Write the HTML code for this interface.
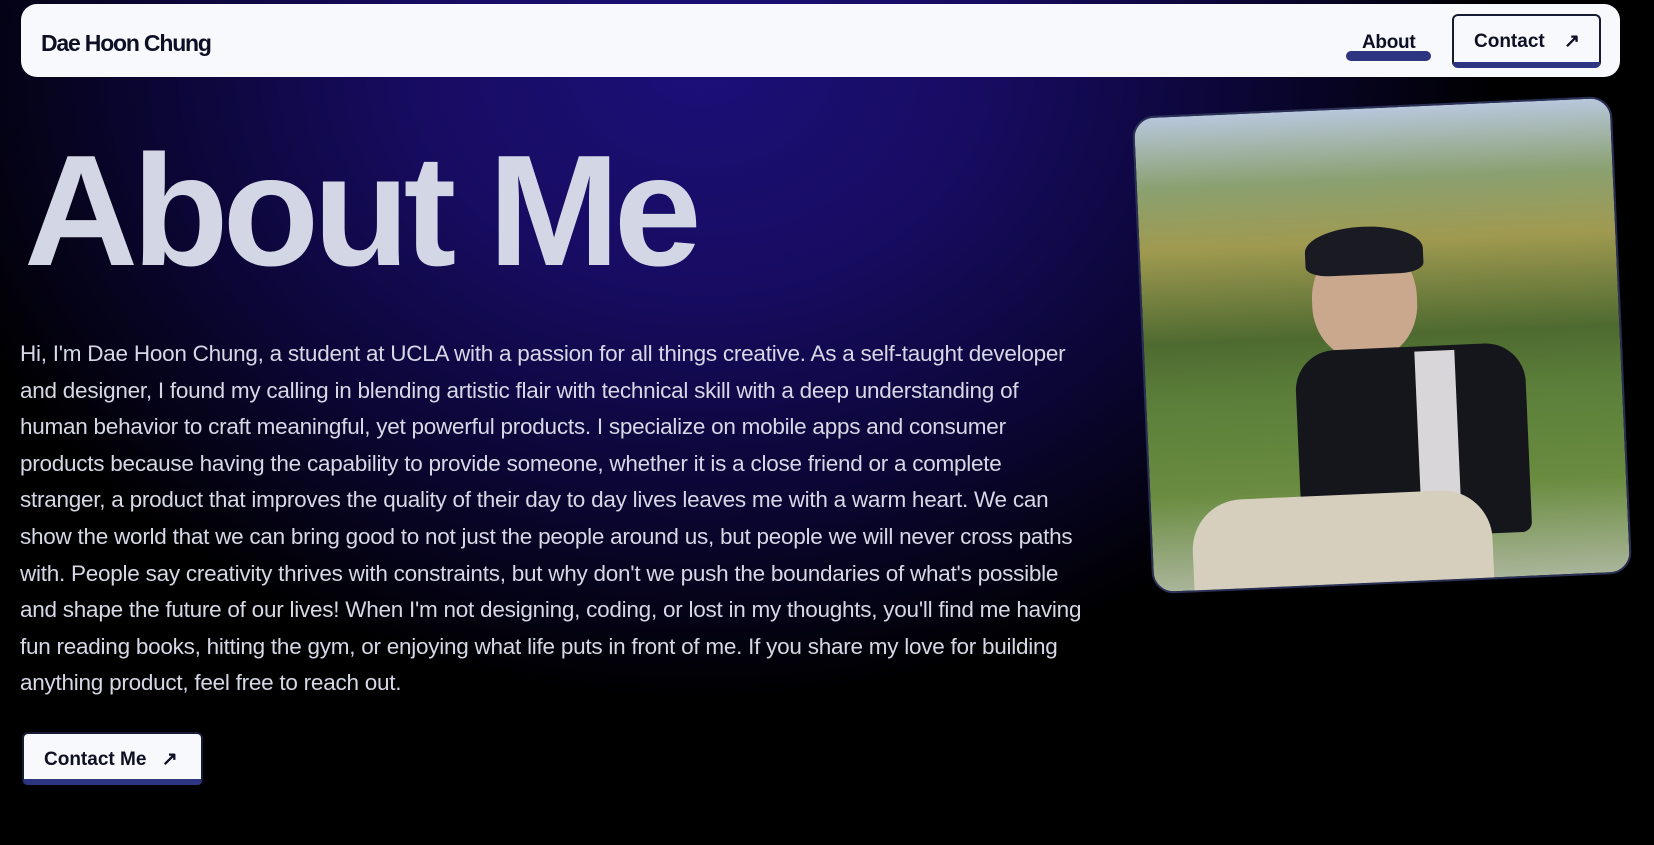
<!DOCTYPE html>
<html><head><style>
*{margin:0;padding:0;box-sizing:border-box}
body{width:1654px;height:845px;overflow:hidden;background:#000;font-family:"Liberation Sans",sans-serif;position:relative;
background:radial-gradient(ellipse 800px 640px at 700px 60px,#1c0f78 0%,#170c62 35%,#0b0635 68%,#000 100%);}
.nav{position:absolute;left:21px;top:4px;width:1599px;height:73px;background:#f8f9fc;border-radius:16px}
.logo{position:absolute;left:20px;top:26px;font-size:23px;font-weight:bold;color:#0d1024;letter-spacing:-1.2px}
.about{position:absolute;left:1341px;top:28px;font-size:19px;font-weight:bold;color:#0d1024;letter-spacing:-0.3px}
.pill{position:absolute;left:1325px;top:47px;width:85px;height:10px;border-radius:5px;background:#2d3582}
.btn{position:absolute;background:#f8f9fc;border:2px solid #161a33;border-bottom:6px solid #2d3582;border-radius:6px;font-weight:bold;color:#0d1024;font-size:19px}
.h1{position:absolute;left:24px;top:132px;font-size:158px;font-weight:bold;color:#d3d6e4;letter-spacing:-6px;line-height:1}
.p{position:absolute;left:20px;top:336px;font-size:22.5px;line-height:36.6px;color:#d6d8e6;white-space:nowrap;letter-spacing:-0.25px}
.photo{position:absolute;left:1142px;top:106px;width:480px;height:478px;border-radius:22px;border:2px solid #2a2f55;transform:rotate(-2.5deg);overflow:hidden;
background:linear-gradient(180deg,#b8c7dc 0%,#8aa070 15%,#a09a50 28%,#4e6a30 48%,#5b7f3a 60%,#6a8c40 80%,#aab59a 100%)}
</style></head><body>
<div class="nav">
<div class="logo">Dae Hoon Chung</div>
<div class="about">About</div>
<div class="pill"></div>
<div class="btn" style="left:1431px;top:10px;width:149px;height:54px;padding:14px 0 0 20px">Contact <span style="margin-left:14px">↗</span></div>
</div>
<div class="h1">About Me</div>
<div class="p">Hi, I'm Dae Hoon Chung, a student at UCLA with a passion for all things creative. As a self-taught developer<br>and designer, I found my calling in blending artistic flair with technical skill with a deep understanding of<br>human behavior to craft meaningful, yet powerful products. I specialize on mobile apps and consumer<br>products because having the capability to provide someone, whether it is a close friend or a complete<br>stranger, a product that improves the quality of their day to day lives leaves me with a warm heart. We can<br>show the world that we can bring good to not just the people around us, but people we will never cross paths<br>with. People say creativity thrives with constraints, but why don't we push the boundaries of what's possible<br>and shape the future of our lives! When I'm not designing, coding, or lost in my thoughts, you'll find me having<br>fun reading books, hitting the gym, or enjoying what life puts in front of me. If you share my love for building<br>anything product, feel free to reach out.</div>
<div class="btn" style="left:22px;top:732px;width:181px;height:53px;padding:14px 0 0 20px">Contact Me <span style="margin-left:10px">↗</span></div>
<div class="photo">
<div style="position:absolute;left:170px;top:130px;width:105px;height:120px;border-radius:50% 50% 45% 45%;background:#c9a88e"></div>
<div style="position:absolute;left:165px;top:118px;width:118px;height:48px;border-radius:50% 50% 20% 20%;background:#1a1a22"></div>
<div style="position:absolute;left:150px;top:240px;width:230px;height:190px;border-radius:40px 40px 10px 10px;background:#15151c"></div>
<div style="position:absolute;left:270px;top:245px;width:40px;height:170px;background:#d8d6d8"></div>
<div style="position:absolute;left:40px;top:385px;width:300px;height:110px;border-radius:50px 50px 0 0;background:#d6cfbd"></div>
</div>
</body></html>
